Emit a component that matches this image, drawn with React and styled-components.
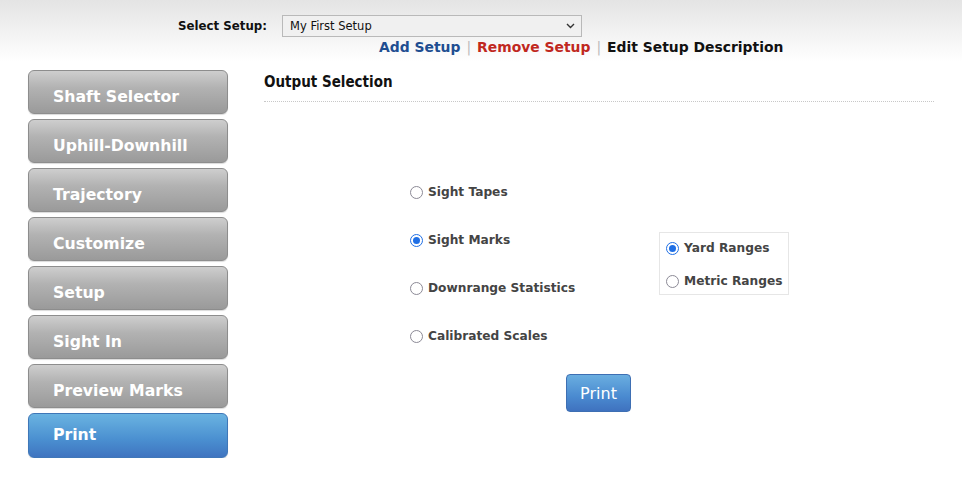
import React, { useState } from "react";
import styled, { createGlobalStyle } from "styled-components";

const Global = createGlobalStyle`
  html, body { margin: 0; padding: 0; background: #fff; }
  body { font-family: "DejaVu Sans", Verdana, sans-serif; }
`;

const Header = styled.header`
  height: 62px;
  background: linear-gradient(#e4e4e4, #ffffff);
  padding: 15px 0 0 178px;
  box-sizing: border-box;
`;

const SelectRow = styled.div`
  display: flex;
  align-items: center;
  height: 22px;
`;

const Label = styled.span`
  font-size: 11.8px;
  font-weight: bold;
  color: #111;
  width: 104px;
`;

const SelectBox = styled.div`
  width: 300px;
  height: 22px;
  box-sizing: border-box;
  border: 1px solid #b9b9b9;
  background: #f0f0f0;
  display: flex;
  align-items: center;
  justify-content: space-between;
  padding: 0 6px 0 7px;
  font-size: 11.5px;
  color: #111;
`;

const LinksRow = styled.div`
  display: flex;
  align-items: center;
  margin: 0 0 0 201px;
  font-size: 13.9px;
  font-weight: bold;
  height: 20px;
`;

const Link = styled.span`
  color: ${(p) => p.$color};
`;

const Sep = styled.span`
  color: #bbb;
  font-weight: normal;
  margin: 0 6px;
`;

const Main = styled.div`
  display: flex;
  padding: 8px 0 0 28px;
`;

const Sidebar = styled.nav`
  display: flex;
  flex-direction: column;
  gap: 5px;
  width: 200px;
`;

const NavButton = styled.div`
  height: ${(p) => (p.$active ? 45 : 44)}px;
  box-sizing: border-box;
  border-radius: 6px;
  border: 1px solid ${(p) => (p.$active ? "#3f77b8" : "#8d8d8d")};
  background: ${(p) =>
    p.$active
      ? "linear-gradient(#6ab3e1, #4a8fd0 60%, #3f74c0)"
      : "linear-gradient(#cecece, #b2b2b2 40%, #9a9a9a)"};
  color: #fff;
  font-size: 15.7px;
  font-weight: bold;
  display: flex;
  align-items: ${(p) => (p.$active ? "flex-start" : "center")};
  padding: ${(p) => (p.$active ? "11px 0 0 24px" : "9px 0 0 24px")};
  box-shadow: 0 1px 1px rgba(0,0,0,0.15);
`;

const Content = styled.section`
  margin-left: 36px;
  width: 670px;
`;

const Title = styled.h2`
  margin: 0;
  padding-top: 3px;
  font-family: "DejaVu Sans Condensed", "DejaVu Sans", sans-serif;
  font-size: 15px;
  font-weight: bold;
  color: #111;
  height: 32px;
  box-sizing: border-box;
  border-bottom: 1px dotted #c8c8c8;
`;

const Body = styled.div`
  display: flex;
  padding: 82px 0 0 146px;
`;

const Options = styled.div`
  display: flex;
  flex-direction: column;
  gap: 32px;
  width: 249px;
`;

const Option = styled.label`
  display: flex;
  align-items: center;
  gap: 5px;
  font-size: 12.2px;
  font-weight: bold;
  color: #444;
  height: 16px;
  cursor: pointer;
`;

const Radio = styled.span`
  width: 13px;
  height: 13px;
  box-sizing: border-box;
  border-radius: 50%;
  border: ${(p) => (p.$on ? "1.5px solid #1f6fe5" : "1.5px solid #8c8a96")};
  background: #fff;
  display: flex;
  align-items: center;
  justify-content: center;
  &::after {
    content: "";
    width: 7px;
    height: 7px;
    border-radius: 50%;
    background: ${(p) => (p.$on ? "#1f6fe5" : "transparent")};
  }
`;

const SubBox = styled.div`
  margin-top: 48px;
  width: 130px;
  height: 63px;
  box-sizing: border-box;
  border: 1px solid #e6e6e6;
  padding: 7px 0 0 6px;
  display: flex;
  flex-direction: column;
  gap: 17px;
`;

const PrintButton = styled.button`
  display: block;
  margin: 30px 0 0 302px;
  width: 65px;
  height: 38px;
  border-radius: 4px;
  border: 1px solid #3e6fb3;
  background: linear-gradient(#6aaee0, #4a8ad0 60%, #3f72bf);
  color: #fff;
  font-family: "DejaVu Sans", Verdana, sans-serif;
  font-size: 16px;
  padding: 0;
`;

const navItems = [
  "Shaft Selector",
  "Uphill-Downhill",
  "Trajectory",
  "Customize",
  "Setup",
  "Sight In",
  "Preview Marks",
  "Print",
];

const outputs = ["Sight Tapes", "Sight Marks", "Downrange Statistics", "Calibrated Scales"];

export default function App() {
  const [output, setOutput] = useState("Sight Marks");
  const [range, setRange] = useState("Yard Ranges");
  return (
    <>
      <Global />
      <Header>
        <SelectRow>
          <Label>Select Setup:</Label>
          <SelectBox>
            <span>My First Setup</span>
            <svg width="9" height="6" viewBox="0 0 9 6">
              <path d="M1 1l3.5 3.5L8 1" fill="none" stroke="#333" strokeWidth="1.4" />
            </svg>
          </SelectBox>
        </SelectRow>
        <LinksRow>
          <Link $color="#1f4e91">Add Setup</Link>
          <Sep>|</Sep>
          <Link $color="#c0281e">Remove Setup</Link>
          <Sep>|</Sep>
          <Link $color="#111">Edit Setup Description</Link>
        </LinksRow>
      </Header>
      <Main>
        <Sidebar>
          {navItems.map((n) => (
            <NavButton key={n} $active={n === "Print"}>
              {n}
            </NavButton>
          ))}
        </Sidebar>
        <Content>
          <Title>Output Selection</Title>
          <Body>
            <Options>
              {outputs.map((o) => (
                <Option key={o} onClick={() => setOutput(o)}>
                  <Radio $on={output === o} />
                  {o}
                </Option>
              ))}
            </Options>
            <SubBox>
              {["Yard Ranges", "Metric Ranges"].map((r) => (
                <Option key={r} onClick={() => setRange(r)}>
                  <Radio $on={range === r} />
                  {r}
                </Option>
              ))}
            </SubBox>
          </Body>
          <PrintButton>Print</PrintButton>
        </Content>
      </Main>
    </>
  );
}
